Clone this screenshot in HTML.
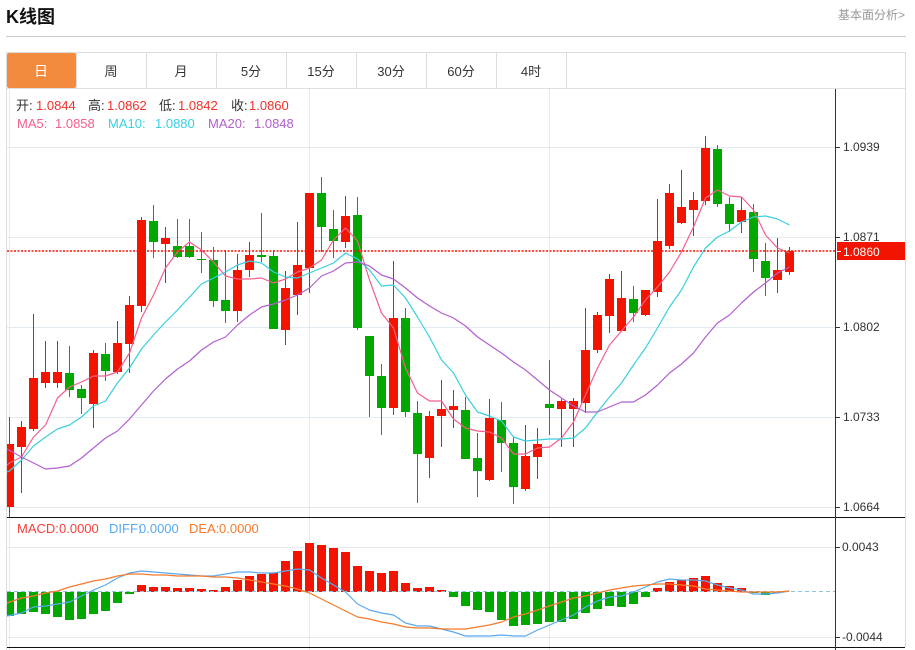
<!DOCTYPE html>
<html><head><meta charset="utf-8"><title>K线图</title>
<style>
html,body{margin:0;padding:0;background:#fff;width:915px;height:650px;overflow:hidden}
svg{display:block}
text{font-family:"Liberation Sans","Noto Sans CJK SC",sans-serif;font-size:13px}
.a{font-size:12px;fill:#333}
.m{fill:none;stroke-linejoin:round;stroke-width:1.2}
</style></head><body>
<svg width="915" height="650" viewBox="0 0 915 650" xmlns="http://www.w3.org/2000/svg">
<text x="6" y="23" style="font-size:18px;font-weight:bold" fill="#111">K线图</text>
<text x="838" y="19" style="font-size:12px" fill="#999">基本面分析&gt;</text>
<path d="M6 36.5H906" stroke="#ccc" fill="none"/>
<path d="M6.5 650V52.5H905.5V647" stroke="#ddd" fill="none"/>
<path d="M7 88.5H905" stroke="#e0e0e0" fill="none"/>
<rect x="7" y="53" width="69" height="35" rx="2" fill="#f38b3f"/>
<path d="M76.5 53V88M146.5 53V88M216.5 53V88M286.5 53V88M356.5 53V88M426.5 53V88M496.5 53V88M566.5 53V88" stroke="#ddd" fill="none"/>
<g text-anchor="middle" fill="#333">
<text x="41" y="76" fill="#fff" style="font-size:14px">日</text>
<text x="111" y="76">周</text><text x="181" y="76">月</text><text x="251" y="76">5分</text><text x="321" y="76">15分</text><text x="391" y="76">30分</text><text x="461" y="76">60分</text><text x="531" y="76">4时</text>
</g>
<path d="M7 147.5H835M7 237.5H835M7 327.5H835M7 417.5H835M7 507.5H835M7 547.5H835M7 637.5H835M9.5 89V650M309.5 89V650M549.5 89V650" stroke="#e3ebf2" fill="none"/>

<clipPath id="c"><rect x="7" y="89" width="828" height="428"/></clipPath>
<g clip-path="url(#c)">
<path fill="none" stroke="#f31400" d="M9.5 417V517M21.5 421V493M33.5 314V431M45.5 341V388M57.5 341V388M93.5 350V428M117.5 321V374M129.5 296V373M141.5 217V312M165.5 227V283M237.5 254V322M249.5 242V277M285.5 271V345M297.5 222V315M309.5 193V293M345.5 196V248M393.5 261V415M429.5 411V478M441.5 380V447M453.5 390V428M489.5 399V481M525.5 425V491M537.5 428V479M561.5 399V447M573.5 398V447M585.5 308V413M597.5 312V353M609.5 274V333M621.5 271V331M645.5 290V316M657.5 199V297M669.5 184V249M681.5 170V224M693.5 192V236M705.5 136V205M741.5 197V233M777.5 238V293M789.5 247V275"/>
<path fill="none" stroke="#00a800" d="M69.5 346V397M81.5 385V414M105.5 343V381M153.5 205V258M177.5 219V258M189.5 219V258M201.5 232V273M213.5 247V307M225.5 250V323M261.5 213V262M273.5 250V329M321.5 177V252M333.5 210V258M357.5 197V330M369.5 336V417M381.5 364V435M405.5 308V417M417.5 401V503M465.5 397V459M477.5 433V497M501.5 402V472M513.5 437V504M549.5 360V435M633.5 286V322M717.5 145V207M729.5 197V232M753.5 204V272M765.5 243V296"/>
<path fill="#f31400" d="M5 444h9V507h-9zM17 427h9V447h-9zM29 378h9V429h-9zM41 372h9V383h-9zM53 372h9V383h-9zM89 353h9V404h-9zM113 343h9V372h-9zM125 305h9V344h-9zM137 220h9V306h-9zM161 238h9V244h-9zM233 270h9V311h-9zM245 255h9V270h-9zM281 288h9V330h-9zM293 265h9V295h-9zM305 193h9V268h-9zM341 216h9V242h-9zM389 318h9V408h-9zM425 416h9V458h-9zM437 409h9V416h-9zM449 406h9V410h-9zM485 418h9V480h-9zM521 456h9V489h-9zM533 444h9V457h-9zM557 401h9V409h-9zM569 401h9V409h-9zM581 350h9V403h-9zM593 315h9V350h-9zM605 279h9V316h-9zM617 298h9V331h-9zM641 290h9V315h-9zM653 241h9V292h-9zM665 193h9V246h-9zM677 207h9V223h-9zM689 200h9V210h-9zM701 148h9V201h-9zM737 210h9V222h-9zM773 270h9V280h-9zM785 251h9V272h-9z"/>
<path fill="#00a800" d="M65 373h9V390h-9zM77 389h9V398h-9zM101 354h9V371h-9zM149 221h9V242h-9zM173 246h9V257h-9zM185 246h9V257h-9zM197 259h9V260h-9zM209 260h9V301h-9zM221 300h9V311h-9zM257 255h9V257h-9zM269 256h9V329h-9zM317 193h9V227h-9zM329 229h9V241h-9zM353 215h9V328h-9zM365 336h9V376h-9zM377 376h9V408h-9zM401 318h9V412h-9zM413 413h9V454h-9zM461 410h9V459h-9zM473 458h9V471h-9zM497 420h9V443h-9zM509 443h9V487h-9zM545 404h9V408h-9zM629 299h9V313h-9zM713 149h9V204h-9zM725 204h9V224h-9zM749 212h9V259h-9zM761 261h9V278h-9z"/>
<path class="m" stroke="#f45f8b" d="M7 465L9.5 463L21.5 457L33.5 437L45.5 425L57.5 398L69.5 387L81.5 382L93.5 376L105.5 376L117.5 372L129.5 353L141.5 318L153.5 295L165.5 268L177.5 252L189.5 242L201.5 250L213.5 262L225.5 276L237.5 279L249.5 279L261.5 278L273.5 283L285.5 279L297.5 272L309.5 268L321.5 260L333.5 240L345.5 228L357.5 241L369.5 280L381.5 313L393.5 328L405.5 368L417.5 393L429.5 401L441.5 401L453.5 419L465.5 428L477.5 431L489.5 432L501.5 438L513.5 454L525.5 454L537.5 448L549.5 447L561.5 438L573.5 422L585.5 395L597.5 368L609.5 345L621.5 331L633.5 317L645.5 300L657.5 287L669.5 272L681.5 252L693.5 227L705.5 198L717.5 190L729.5 196L741.5 197L753.5 210L765.5 235L777.5 248L789.5 253"/>
<path class="m" stroke="#39cfe0" d="M7 472L9.5 471L21.5 460L33.5 446L45.5 437L57.5 429L69.5 425L81.5 417L93.5 406L105.5 401L117.5 383L129.5 368L141.5 349L153.5 335L165.5 322L177.5 310L189.5 297L201.5 284L213.5 278L225.5 272L237.5 265L249.5 261L261.5 263L273.5 272L285.5 277L297.5 278L309.5 273L321.5 268L333.5 263L345.5 253L357.5 259L369.5 270L381.5 286L393.5 285L405.5 298L417.5 317L429.5 337L441.5 360L453.5 373L465.5 395L477.5 412L489.5 416L501.5 421L513.5 437L525.5 441L537.5 440L549.5 439L561.5 439L573.5 438L585.5 428L597.5 412L609.5 397L621.5 383L633.5 365L645.5 348L657.5 328L669.5 307L681.5 290L693.5 267L705.5 248L717.5 237L729.5 231L741.5 222L753.5 217L765.5 216L777.5 219L789.5 225"/>
<path class="m" stroke="#b25fcf" d="M7 449L21.5 457L33.5 463L45.5 469L57.5 468L69.5 466L81.5 458L93.5 448L105.5 438L117.5 431L129.5 419L141.5 405L153.5 391L165.5 379L177.5 369L189.5 361L201.5 350L213.5 342L225.5 337L237.5 325L249.5 315L261.5 307L273.5 304L285.5 300L297.5 295L309.5 288L321.5 276L333.5 271L345.5 263L357.5 262L369.5 266L381.5 275L393.5 279L405.5 288L417.5 298L429.5 306L441.5 313L453.5 318L465.5 326L477.5 337L489.5 345L501.5 353L513.5 362L525.5 370L537.5 380L549.5 390L561.5 398L573.5 406L585.5 412L597.5 412L609.5 407L621.5 402L633.5 402L645.5 395L657.5 385L669.5 373L681.5 364L693.5 353L705.5 337L717.5 323L729.5 315L741.5 303L753.5 292L765.5 283L777.5 273L789.5 267"/>
</g>
<path d="M7 251H835" stroke="#f31400" stroke-width="1.4" stroke-dasharray="2 1.5" fill="none"/>

<path fill="#00a800" d="M7 592h7V616h-7zM17 592h9V614h-9zM29 592h9V612h-9zM41 592h9V614h-9zM53 592h9V617h-9zM65 592h9V620h-9zM77 592h9V619h-9zM89 592h9V614h-9zM101 592h9V611h-9zM113 592h9V603h-9zM125 592h9V594h-9zM449 592h9V597h-9zM461 592h9V606h-9zM473 592h9V610h-9zM485 592h9V612h-9zM497 592h9V620h-9zM509 592h9V626h-9zM521 592h9V625h-9zM533 592h9V624h-9zM545 592h9V622h-9zM557 592h9V622h-9zM569 592h9V619h-9zM581 592h9V613h-9zM593 592h9V609h-9zM605 592h9V606h-9zM617 592h9V607h-9zM629 592h9V604h-9zM641 592h9V597h-9zM749 592h9V593h-9zM761 592h9V595h-9zM773 592h9V593h-9z"/>
<path fill="#f31400" d="M137 585h9V592h-9zM149 587h9V592h-9zM161 587h9V592h-9zM173 588h9V592h-9zM185 588h9V592h-9zM197 589h9V592h-9zM209 590h9V592h-9zM221 587h9V592h-9zM233 580h9V592h-9zM245 576h9V592h-9zM257 574h9V592h-9zM269 573h9V592h-9zM281 561h9V592h-9zM293 551h9V592h-9zM305 543h9V592h-9zM317 545h9V592h-9zM329 548h9V592h-9zM341 552h9V592h-9zM353 566h9V592h-9zM365 571h9V592h-9zM377 573h9V592h-9zM389 571h9V592h-9zM401 583h9V592h-9zM413 588h9V592h-9zM425 587h9V592h-9zM437 590h9V592h-9zM653 588h9V592h-9zM665 582h9V592h-9zM677 580h9V592h-9zM689 578h9V592h-9zM701 576h9V592h-9zM713 583h9V592h-9zM725 586h9V592h-9zM737 588h9V592h-9z"/>
<path d="M7 591.5H835" stroke="#8fc4dc" stroke-dasharray="4 3" fill="none"/>
<path class="m" stroke="#59a9f0" d="M7 616L21.5 613L33.5 607L45.5 606L57.5 604L69.5 602L81.5 596L93.5 590L105.5 585L117.5 578L129.5 573L141.5 571L153.5 572L165.5 573L177.5 574L189.5 575L201.5 576L213.5 576L225.5 574L237.5 572L249.5 572L261.5 573L273.5 573L285.5 571L297.5 569L309.5 570L321.5 578L333.5 585L345.5 592L357.5 604L369.5 610L381.5 613L393.5 615L405.5 623L417.5 626L429.5 626L441.5 629L453.5 632L465.5 636L477.5 636L489.5 636L501.5 635L513.5 636L525.5 636L537.5 630L549.5 625L561.5 620L573.5 615L585.5 607L597.5 601L609.5 597L621.5 596L633.5 592L645.5 587L657.5 582L669.5 579L681.5 580L693.5 580L705.5 581L717.5 585L729.5 588L741.5 590L753.5 594L765.5 594L777.5 593L789.5 591"/>
<path class="m" stroke="#f57a2b" d="M7 603L21.5 598L33.5 596L45.5 593L57.5 591L69.5 587L81.5 584L93.5 581L105.5 579L117.5 576L129.5 574L141.5 574L153.5 575L165.5 575L177.5 576L189.5 576L201.5 576L213.5 577L225.5 577L237.5 578L249.5 580L261.5 582L273.5 584L285.5 586L297.5 589L309.5 593L321.5 599L333.5 605L345.5 611L357.5 617L369.5 619L381.5 622L393.5 624L405.5 627L417.5 628L429.5 628L441.5 629L453.5 629L465.5 629L477.5 627L489.5 625L501.5 622L513.5 617L525.5 614L537.5 610L549.5 606L561.5 602L573.5 598L585.5 596L597.5 593L609.5 590L621.5 588L633.5 586L645.5 585L657.5 584L669.5 584L681.5 585L693.5 586L705.5 589L717.5 590L729.5 591L741.5 592L753.5 592L765.5 592L777.5 592L789.5 591"/>

<path d="M7 517.5H905M7 647.5H905" stroke="#111" fill="none"/>
<path d="M835.5 89V650" stroke="#333" fill="none"/>
<path d="M835 147.5H840M835 237.5H840M835 327.5H840M835 417.5H840M835 507.5H840M835 547.5H840M835 637.5H840" stroke="#333" fill="none"/>
<text class="a" x="843" y="151">1.0939</text>
<text class="a" x="843" y="241">1.0871</text>
<text class="a" x="843" y="331">1.0802</text>
<text class="a" x="843" y="421">1.0733</text>
<text class="a" x="843" y="511">1.0664</text>
<text class="a" x="842" y="551">0.0043</text>
<text class="a" x="842" y="641">-0.0044</text>
<rect x="837" y="242" width="68" height="18" fill="#f31400"/>
<path d="M837 251.5H841" stroke="#fff" fill="none"/>
<text x="843" y="256" style="font-size:12px" fill="#fff">1.0860</text>

<g fill="#333">
<text x="16" y="110">开:</text><text x="88" y="110">高:</text><text x="159" y="110">低:</text><text x="231" y="110">收:</text>
</g>
<g fill="#f3302a">
<text x="36" y="110">1.0844</text><text x="107" y="110">1.0862</text><text x="178" y="110">1.0842</text><text x="249" y="110">1.0860</text>
</g>
<g fill="#f45f8b"><text x="17" y="128">MA5:</text><text x="55" y="128">1.0858</text></g>
<g fill="#39cfe0"><text x="108" y="128">MA10:</text><text x="155" y="128">1.0880</text></g>
<g fill="#b25fcf"><text x="208" y="128">MA20:</text><text x="254" y="128">1.0848</text></g>
<g fill="#f3403a"><text x="17" y="533">MACD:</text><text x="59" y="533">0.0000</text></g>
<g fill="#59a9f0"><text x="109" y="533">DIFF:</text><text x="139" y="533">0.0000</text></g>
<g fill="#f57a2b"><text x="189" y="533">DEA:</text><text x="219" y="533">0.0000</text></g>
</svg>
</body></html>
